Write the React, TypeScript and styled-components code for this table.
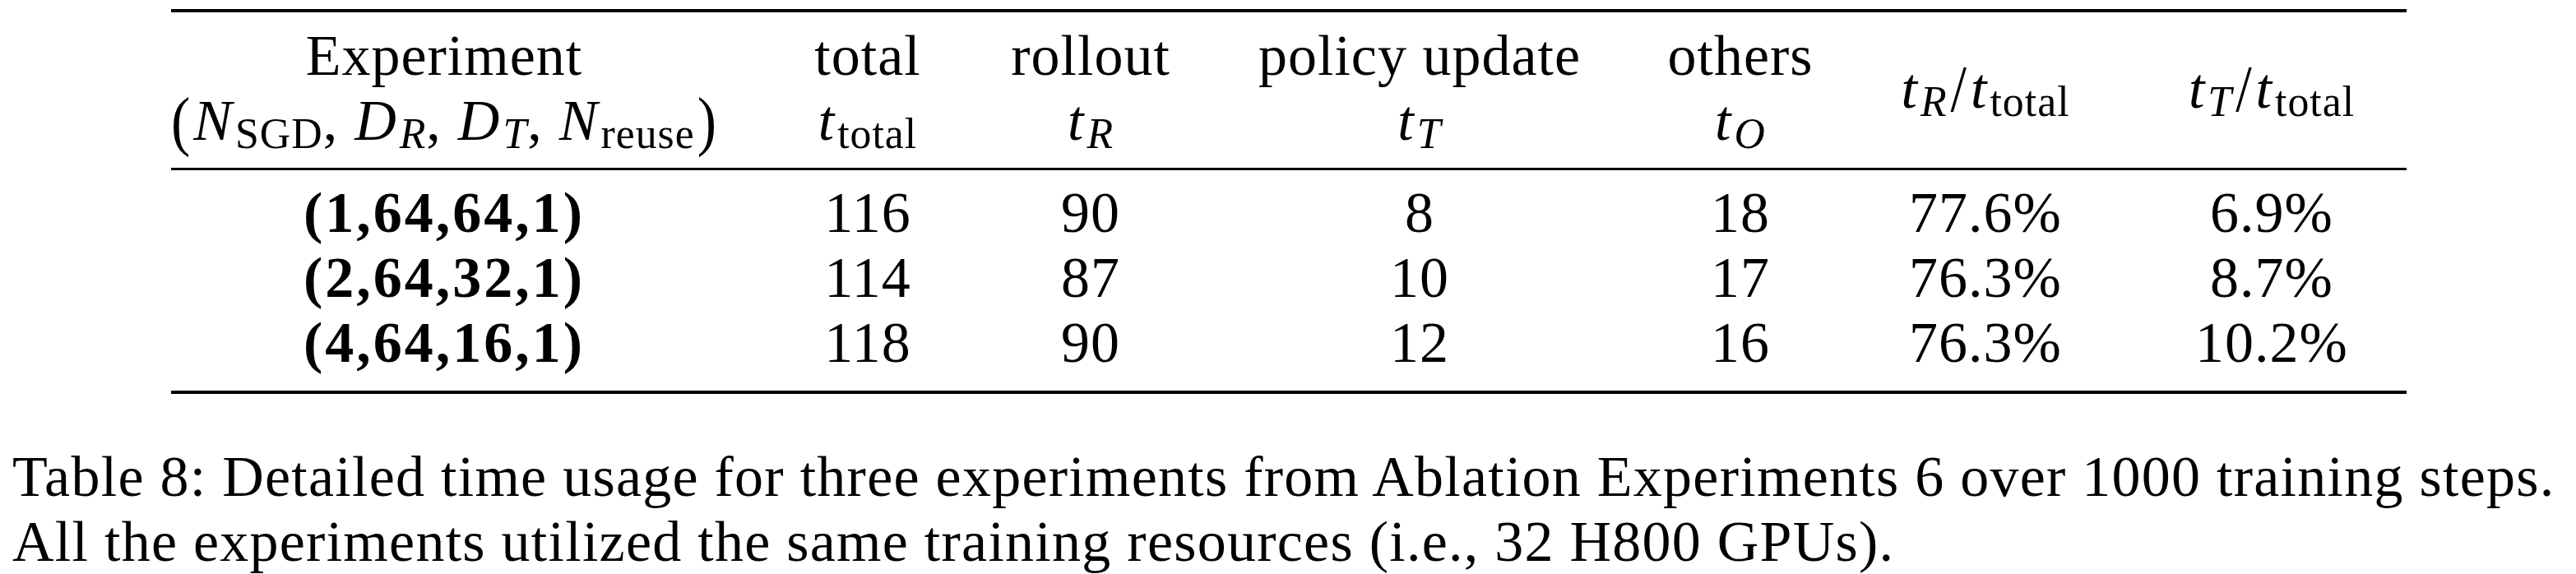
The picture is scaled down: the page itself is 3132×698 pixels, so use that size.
import styled, { createGlobalStyle } from "styled-components";

const GlobalStyle = createGlobalStyle`
  html, body {
    margin: 0;
    padding: 0;
    background: #ffffff;
  }
  body {
    font-family: "Liberation Serif", "Times New Roman", serif;
    color: #000000;
  }
`;

const columns = "664px 366px 176px 624px 156px 440px 256px";

const Page = styled.div`
  width: 3132px;
  height: 698px;
  overflow: hidden;
  box-sizing: border-box;
  padding-top: 11px;
`;

const Table = styled.div`
  margin-left: 208px;
  width: 2718px;
  border-top: 4px solid #000;
  border-bottom: 4px solid #000;
  font-size: 70px;
  line-height: 79px;
`;

const HeadRow = styled.div`
  display: grid;
  grid-template-columns: ${columns};
  padding: 13px 0 18px;
  border-bottom: 3px solid #000;
`;

const Body = styled.div`
  padding: 12px 0 19px;
`;

const Row = styled.div`
  display: grid;
  grid-template-columns: ${columns};
`;

const Cell = styled.div<{ $bold?: boolean }>`
  display: flex;
  flex-direction: column;
  align-items: center;
  justify-content: center;
  white-space: nowrap;
  font-weight: ${(p) => (p.$bold ? 700 : 400)};
  letter-spacing: ${(p) => (p.$bold ? "3px" : "1px")};
`;

const Line = styled.span`
  display: block;
`;

const M = styled.i`
  font-style: italic;
  padding-right: 3px;
`;

const Sub = styled.sub<{ $it?: boolean }>`
  font-size: 0.74em;
  line-height: 0;
  vertical-align: -0.2em;
  font-style: ${(p) => (p.$it ? "italic" : "normal")};
`;

const Comma = styled.span`
  display: inline-block;
  padding-right: 20px;
`;

const Slash = styled.span`
  display: inline-block;
  margin: 0 4px;
  transform: scaleY(1.15);
`;

const Paren = styled.span`
  display: inline-block;
  margin: 0 3px;
  transform: scaleY(1.15);
`;

const Caption = styled.div`
  margin-top: 61px;
  padding-left: 15px;
  font-size: 70px;
  line-height: 79px;
  letter-spacing: 1.25px;
  white-space: nowrap;
`;

const rows = [
  ["(1,64,64,1)", "116", "90", "8", "18", "77.6%", "6.9%"],
  ["(2,64,32,1)", "114", "87", "10", "17", "76.3%", "8.7%"],
  ["(4,64,16,1)", "118", "90", "12", "16", "76.3%", "10.2%"],
];

const Total = () => (
  <>
    <M>t</M>
    <Sub>total</Sub>
  </>
);

export default function App() {
  return (
    <>
      <GlobalStyle />
      <Page>
        <Table>
          <HeadRow>
            <Cell>
              <Line>Experiment</Line>
              <Line>
                <Paren>(</Paren>
                <M>N</M>
                <Sub>SGD</Sub>
                <Comma>,</Comma>
                <M>D</M>
                <Sub $it>R</Sub>
                <Comma>,</Comma>
                <M>D</M>
                <Sub $it>T</Sub>
                <Comma>,</Comma>
                <M>N</M>
                <Sub>reuse</Sub>
                <Paren>)</Paren>
              </Line>
            </Cell>
            <Cell>
              <Line>total</Line>
              <Line>
                <Total />
              </Line>
            </Cell>
            <Cell>
              <Line>rollout</Line>
              <Line>
                <M>t</M>
                <Sub $it>R</Sub>
              </Line>
            </Cell>
            <Cell>
              <Line>policy update</Line>
              <Line>
                <M>t</M>
                <Sub $it>T</Sub>
              </Line>
            </Cell>
            <Cell>
              <Line>others</Line>
              <Line>
                <M>t</M>
                <Sub $it>O</Sub>
              </Line>
            </Cell>
            <Cell>
              <Line>
                <M>t</M>
                <Sub $it>R</Sub>
                <Slash>/</Slash>
                <Total />
              </Line>
            </Cell>
            <Cell>
              <Line>
                <M>t</M>
                <Sub $it>T</Sub>
                <Slash>/</Slash>
                <Total />
              </Line>
            </Cell>
          </HeadRow>
          <Body>
            {rows.map((r) => (
              <Row key={r[0]}>
                {r.map((v, i) => (
                  <Cell key={i} $bold={i === 0}>
                    {v}
                  </Cell>
                ))}
              </Row>
            ))}
          </Body>
        </Table>
        <Caption>
          <Line>
            Table 8: Detailed time usage for three experiments from Ablation
            Experiments 6 over 1000 training steps.
          </Line>
          <Line>
            All the experiments utilized the same training resources (i.e., 32
            H800 GPUs).
          </Line>
        </Caption>
      </Page>
    </>
  );
}
